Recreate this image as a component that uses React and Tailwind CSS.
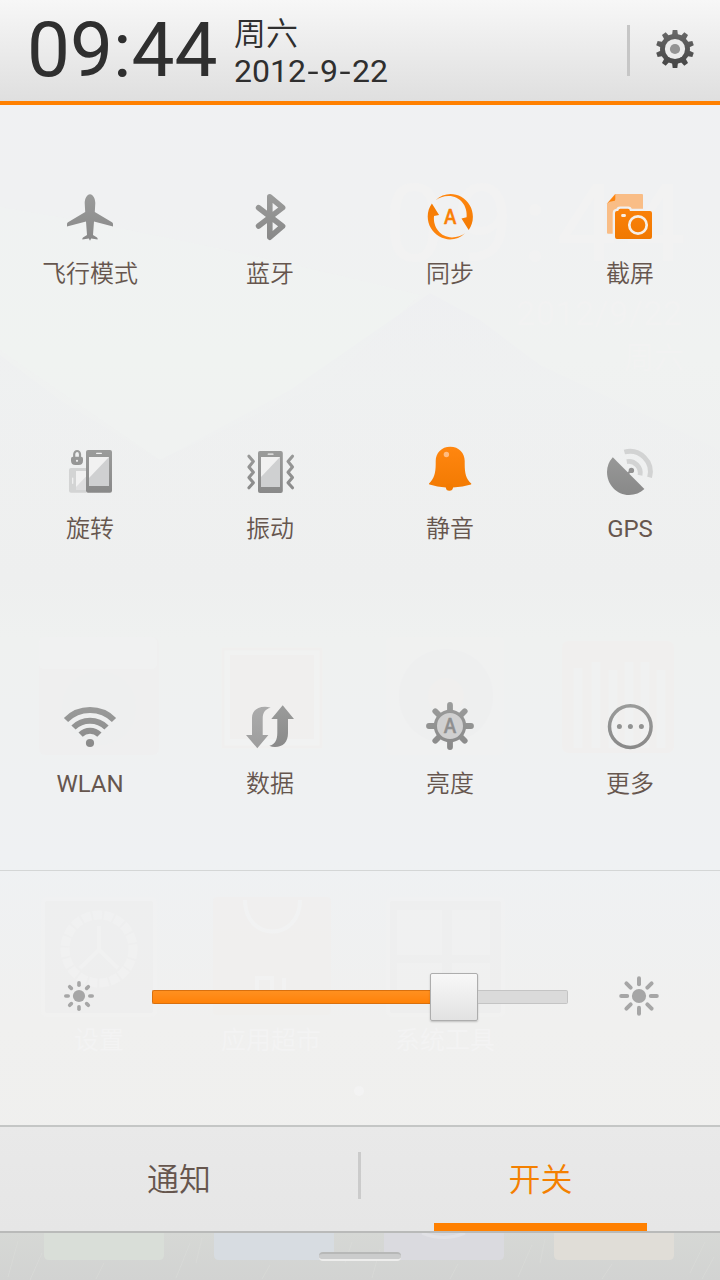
import React from "react";

const GREY = "url(#grey)";
const ORANGE = "url(#orange)";

function Gradients() {
  return (
    <svg className="absolute h-0 w-0" aria-hidden="true">
      <defs>
        <linearGradient id="grey" gradientUnits="userSpaceOnUse" x1="0" y1="6" x2="0" y2="54">
          <stop offset="0" stopColor="#9b9c9b" />
          <stop offset="1" stopColor="#888888" />
        </linearGradient>
        <linearGradient id="lightGrey" gradientUnits="userSpaceOnUse" x1="0" y1="6" x2="0" y2="54">
          <stop offset="0" stopColor="#adadad" />
          <stop offset="1" stopColor="#9c9c9c" />
        </linearGradient>
        <linearGradient id="orange" gradientUnits="userSpaceOnUse" x1="0" y1="6" x2="0" y2="54">
          <stop offset="0" stopColor="#ff860f" />
          <stop offset="1" stopColor="#f07800" />
        </linearGradient>
        <linearGradient id="gear" gradientUnits="userSpaceOnUse" x1="0" y1="0" x2="0" y2="40">
          <stop offset="0" stopColor="#6a6a6a" />
          <stop offset="1" stopColor="#434343" />
        </linearGradient>
      </defs>
    </svg>
  );
}

function Icon({ children }) {
  return (
    <svg className="block h-[60px] w-[60px]" viewBox="0 0 60 60" fill="none" aria-hidden="true">
      {children}
    </svg>
  );
}

const Airplane = () => (
  <Icon>
    <path
      fill={GREY}
      d="M30 7.2C27 7.4 24.7 11.5 24.7 16L25.2 25 8 35.2Q7 35.9 7 37V39.5L26 34.4 27 48 23 50.4Q22 51.2 22.4 52.4L28.8 51.6 30 53.8 31.2 51.6 37.6 52.4Q38 51.2 37 50.4L33 48 34 34.4 53 39.5V37Q53 35.9 52 35.2L34.8 25 35.3 16C35.3 11.5 33 7.4 30 7.2Z"
    />
  </Icon>
);

const Bluetooth = () => (
  <Icon>
    <path
      stroke={GREY}
      strokeWidth="5.6"
      strokeLinecap="round"
      strokeLinejoin="round"
      d="M18.6 20.8L42.6 39.2 29.8 50.2V9.8L42.6 20.6 18.6 39"
    />
  </Icon>
);

const syncHalf =
  "M15.6 13.2C22.5 6.3 33 5.1 41.2 9.8 48.4 14 52.9 21.4 52.9 29.8 52.9 34.8 51.4 39.3 48.7 43L41.5 31.4 46.6 30.3C47.8 19 40 8.9 28.5 9 23.5 9.1 19 10.6 15.6 13.2Z";

const Sync = () => (
  <Icon>
    <path fill={ORANGE} d={syncHalf} />
    <path fill={ORANGE} d={syncHalf} transform="rotate(180 30.3 29.7)" />
    <g transform="translate(30.2 37.2) scale(0.84 1)">
      <text textAnchor="middle" fill="#fa8005" stroke="#fa8005" strokeWidth="0.5" strokeLinejoin="round" className="font-['Lato',sans-serif] text-[20.5px] font-bold">A</text>
    </g>
  </Icon>
);

const Screenshot = () => (
  <Icon>
    <path fill="#f9bd86" d="M15 7H42Q43 7 43 8V46.7H8Q7 46.7 7 45.7V16.4Z" />
    <path fill={ORANGE} d="M15.3 7.3V12.2Q15.3 14 13.5 14.1 9.2 14.3 7.2 16.6Z" />
    <path fill="#f0f0f1" d="M12.7 47V26Q12.7 22.2 16.4 21.8 17.2 19.4 20 19.4H28.5Q31 19.4 31.8 21.8H44V47Z" />
    <path fill={ORANGE} d="M17 24H18.2Q18.6 21.8 20.4 21.8H28Q29.6 21.8 30 24H50Q52 24 52 26V50Q52 52 50 52H17Q15 52 15 50V26Q15 24 17 24Z" />
    <circle cx="38" cy="38" r="8.7" stroke="#f6efe8" strokeWidth="2.7" />
    <rect x="21.2" y="27" width="4.7" height="3.1" rx="1.3" fill="#f8eee4" />
  </Icon>
);

const Rotate = () => (
  <Icon>
    <path fill="#d3d4d4" d="M11 26H26V50.7H11Q9 50.7 9 48.7V28Q9 26 11 26Z" />
    <rect x="16" y="29" width="10" height="19" fill="#dededf" />
    <path fill="#f1f1f1" d="M16 29H26V34.5L16 45Z" />
    <path stroke="#f2f2f2" strokeLinecap="round" strokeWidth="1.2" d="M12.7 36V41.3" />
    <rect x="26" y="8" width="26" height="42.7" rx="2" fill={GREY} />
    <rect x="29" y="15" width="20" height="29" fill="#cfd0d1" />
    <path fill="#f1f1f1" d="M29 15H49L29 36Z" />
    <path stroke="#f1f1f1" strokeLinecap="round" strokeWidth="1.2" d="M36.6 11.3H41.4" />
    <path stroke={GREY} strokeWidth="2.2" d="M14.2 16V12.2A2.9 3.2 0 0 1 20 12.2V16" />
    <path fill={GREY} d="M13 14.8H21Q23 14.8 23 16.6V18.5Q23 23 18.5 23H15.5Q11 23 11 18.5V16.6Q11 14.8 13 14.8Z" />
    <circle cx="17" cy="18.8" r="1.1" fill="#eee" />
  </Icon>
);

const Vibrate = () => (
  <Icon>
    <rect x="18" y="9" width="24.8" height="42" rx="2" fill={GREY} />
    <rect x="21" y="15" width="19" height="30" fill="#cfd0d1" />
    <path fill="#f1f1f1" d="M21 15H40L21 35Z" />
    <path stroke="#f1f1f1" strokeLinecap="round" strokeWidth="1.2" d="M28.2 12.2H33" />
    <g stroke={GREY} strokeWidth="3.1" strokeLinecap="round" strokeLinejoin="round">
      <path d="M8.9 14.2L13.4 19.4 8.9 25 13.4 30.2 8.9 35.4 13.4 40.8 8.9 45.8" />
      <path d="M52.5 14.2L48 19.4 52.5 25 48 30.2 52.5 35.4 48 40.8 52.5 45.8" />
    </g>
  </Icon>
);

const Bell = () => (
  <Icon>
    <path
      fill={ORANGE}
      d="M30.2 4.7C21.5 4.7 15.7 11 15.7 19V22C15.7 31 14 37 9 41.4Q8.8 42.2 9.6 42.6 17 45 26 45.6A3.6 3.2 0 0 0 33 45.6Q43 45 51 42.6 51.6 42 51.2 41.4C46 37 44.7 31 44.7 22V19C44.7 11 39 4.7 30.2 4.7Z"
    />
    <circle cx="29.4" cy="45.2" r="3.5" fill="#f27a01" />
    <circle cx="26.4" cy="12.5" r="2.7" fill="#ffbb80" />
  </Icon>
);

const Gps = () => (
  <Icon>
    <path stroke="#d2d3d3" strokeWidth="4.9" d="M24.4 10A20.6 20.6 0 0 1 49.6 35.3" />
    <path stroke="#d2d3d3" strokeWidth="4.9" d="M26.8 19.6A11.5 11.5 0 0 1 40 33.2" />
    <path fill={GREY} d="M12.8 15.2A22 22 0 0 0 7 30C7 42.6 16.6 53 29 53 35 53 40.4 50.8 44.4 47Z" />
    <path stroke={GREY} strokeWidth="2.2" d="M27.5 32L31.5 28" />
    <circle cx="31.4" cy="28.4" r="2.7" fill="#929292" />
  </Icon>
);

const Wifi = () => (
  <Icon>
    <circle cx="30" cy="46" r="4.1" fill={GREY} />
    <g stroke={GREY} strokeWidth="6">
      <path d="M6 23A34 34 0 0 1 54 23" />
      <path d="M13.5 30.5A23.3 23.3 0 0 1 46.5 30.5" />
      <path d="M20.6 37.6A13.3 13.3 0 0 1 39.4 37.6" />
    </g>
  </Icon>
);

const Data = () => (
  <Icon>
    <path fill="url(#lightGrey)" d="M12 38V21C12 14 17 9.7 25 9.7Q28 9.7 30.7 10.8C25 12 22.7 16 22.7 22V38H28.4L17.3 51.2 6 38Z" />
    <path fill={GREY} d="M42.7 8.2L54 22H48V36C48 45 43 50 35 50Q32 50 29.3 48.8C35 47.5 37.3 43 37.3 36V22H31.3Z" />
  </Icon>
);

const Brightness = () => (
  <Icon>
    <g stroke={GREY} strokeWidth="5.8" strokeLinecap="round">
      <path d="M30 15V8M30 43V50M16 29H9M44 29H51M20 19L15.3 14.3M40 19L44.7 14.3M20 39L15.3 43.7M40 39L44.7 43.7" />
    </g>
    <circle cx="30" cy="29" r="14.6" fill="#d0d0d0" stroke={GREY} strokeWidth="3.2" />
    <g transform="translate(30 36.2) scale(0.84 1)">
      <text textAnchor="middle" fill="#8f8f8f" stroke="#8f8f8f" strokeWidth="0.5" strokeLinejoin="round" className="font-['Lato',sans-serif] text-[20.5px] font-bold">A</text>
    </g>
  </Icon>
);

const More = () => (
  <Icon>
    <circle cx="30.3" cy="29.6" r="20.8" stroke={GREY} strokeWidth="3.5" />
    <circle cx="19.4" cy="29.6" r="2.5" fill={GREY} />
    <circle cx="30.4" cy="29.6" r="2.5" fill={GREY} />
    <circle cx="41.4" cy="29.6" r="2.5" fill={GREY} />
  </Icon>
);

const toggles = [
  { label: "飞行模式", icon: Airplane },
  { label: "蓝牙", icon: Bluetooth },
  { label: "同步", icon: Sync },
  { label: "截屏", icon: Screenshot },
  { label: "旋转", icon: Rotate },
  { label: "振动", icon: Vibrate },
  { label: "静音", icon: Bell },
  { label: "GPS", icon: Gps },
  { label: "WLAN", icon: Wifi },
  { label: "数据", icon: Data },
  { label: "亮度", icon: Brightness },
  { label: "更多", icon: More },
];

const toothAngles = [0, 36, 72, 108, 144, 180, 216, 252, 288, 324];

function SettingsGear() {
  return (
    <svg className="block h-10 w-10" viewBox="0 0 40 40" aria-hidden="true">
      <mask id="teeth">
        {toothAngles.map((a) => (
          <path key={a} fill="#fff" d="M16.8 8L17.7 1H22.3L23.2 8Z" transform={`rotate(${a} 20 20)`} />
        ))}
        <circle cx="20" cy="20" r="15" fill="#fff" />
      </mask>
      <rect width="40" height="40" fill="url(#gear)" mask="url(#teeth)" />
      <circle cx="20" cy="20" r="10.1" fill="#ececec" />
      <circle cx="20" cy="20" r="5.1" fill="#949494" />
    </svg>
  );
}

function Sun({ core, from, to, width }) {
  return (
    <svg className="block h-11 w-11" viewBox="-22 -22 44 44" aria-hidden="true">
      <circle r={core} fill="#a6a6a6" />
      {[0, 45, 90, 135, 180, 225, 270, 315].map((a) => (
        <path
          key={a}
          d={`M0 ${-from}V${-to}`}
          transform={`rotate(${a})`}
          stroke="#a6a6a6"
          strokeWidth={width}
          strokeLinecap="round"
        />
      ))}
    </svg>
  );
}

/* The home screen that shows faintly through the translucent shade. */
function HomeScreen() {
  return (
    <svg className="absolute inset-0 h-full w-full" viewBox="0 0 720 1280" aria-hidden="true">
      <defs>
        <linearGradient id="sky" x1="0" y1="0" x2="0" y2="1">
          <stop offset="0" stopColor="#f0f1f3" />
          <stop offset="0.16" stopColor="#f0f1f2" />
          <stop offset="0.28" stopColor="#f0f2f1" />
          <stop offset="0.45" stopColor="#eeefef" />
          <stop offset="0.5" stopColor="#eff1f0" />
          <stop offset="0.67" stopColor="#eff1f3" />
          <stop offset="0.8" stopColor="#f0f0ef" />
          <stop offset="1" stopColor="#efefed" />
        </linearGradient>
        <linearGradient id="hill" x1="0" y1="0" x2="0" y2="1">
          <stop offset="0" stopColor="#eeeff1" />
          <stop offset="1" stopColor="#eeeff0" stopOpacity="0" />
        </linearGradient>
      </defs>
      <rect width="720" height="1280" fill="url(#sky)" />
      <path d="M0 207Q200 240 420 295L330 380 160 460 0 350Z" fill="#f0f3f2" opacity="0.6" />
      <path d="M0 355L60 400 160 460 290 390 430 293 480 320 540 365 720 450V600H0Z" fill="url(#hill)" opacity="0.7" />
      <g fill="#f2f2f2" className="font-['Roboto','Noto_Sans_CJK_SC',sans-serif]">
        <text x="384" y="261" className="text-[108px]" textLength="302">09:44</text>
        <text x="516" y="325" className="text-[34px]" textLength="166">2012/9/22</text>
        <text x="624" y="368" className="text-[30px]">周六</text>
      </g>
      <g opacity="0.55">
        <rect x="39" y="637" width="120" height="118" rx="6" fill="#efefef" />
        <rect x="39" y="637" width="118" height="32" rx="5" fill="#f2f2f2" />
        <circle cx="99" cy="708" r="37" fill="#eeeeef" />
        <rect x="223" y="649" width="98" height="98" fill="#f3f3f3" stroke="#f2efed" strokeWidth="3" />
        <rect x="230" y="655" width="84" height="84" fill="#f1efed" />
        <rect x="386" y="637" width="118" height="118" rx="6" fill="#f1f1f1" />
        <circle cx="446" cy="696" r="47" fill="#eeeeef" />
        <circle cx="446" cy="696" r="18" fill="#f1efed" />
        <rect x="564" y="643" width="108" height="108" rx="4" fill="#f1efed" stroke="#f2efed" strokeWidth="4" />
        <path d="M578 748V668M596 748V662M613 748V670M629 748V662M645 748V662M661 748V670" stroke="#f1f1f2" strokeWidth="9" />
        <rect x="43" y="899" width="112" height="116" rx="4" fill="#eeeeee" stroke="#f2f2f2" strokeWidth="4" />
        <circle cx="99" cy="949" r="34" fill="none" stroke="#f2f2f2" strokeWidth="9" strokeDasharray="9 2" />
        <path d="M99 926V950L80 968M99 950L118 968" fill="none" stroke="#f2f2f2" strokeWidth="4" />
        <rect x="213" y="897" width="118" height="118" rx="4" fill="#f1efed" />
        <path d="M245 900C245 942 300 942 300 900" fill="none" stroke="#f4f4f4" strokeWidth="4" />
        <path d="M257 992V978H272V992M284 978V992" fill="none" stroke="#f4f4f4" strokeWidth="4" />
        <rect x="388" y="899" width="115" height="116" rx="4" fill="#eeeeee" stroke="#f2f2f2" strokeWidth="4" />
        <path d="M397 910H442V955H397ZM452 910H490V955H452ZM397 963H442V1000H397ZM452 963H490V1000H452Z" fill="#f1f1f1" />
      </g>
      <g fill="#f3f3f3" className="font-['Noto_Sans_CJK_SC',sans-serif] text-[25px]">
        <text x="74" y="1049">设置</text>
        <text x="221" y="1049">应用超市</text>
        <text x="395" y="1049">系统工具</text>
      </g>
      <circle cx="359" cy="1091" r="5" fill="#f3f3f3" />
    </svg>
  );
}

function Dock() {
  return (
    <div className="relative flex h-[49px] items-start justify-center border-t-2 border-[#b9bab9] bg-linear-to-b from-[#d6d8d5] to-[#d2d3d2]">
      <svg className="absolute inset-x-0 top-0 h-[47px] w-full" viewBox="0 0 720 47" aria-hidden="true">
        <path
          d="M8 44L18 8M30 47L42 20M176 45L190 10M196 30L202 5M345 30L352 9M372 45L380 16M518 44L532 12M540 30L545 6M690 40L705 9M702 46L714 24M96 46L104 30M262 46L270 32M450 46L458 31M602 46L612 31"
          stroke="#dadbd8"
          strokeWidth="0.7"
        />
        <path fill="#d9ded8" d="M44 0H164V22Q164 27 159 27H49Q44 27 44 22Z" />
        <path fill="#d7dce1" d="M214 0H334V22Q334 27 329 27H219Q214 27 214 22Z" />
        <path fill="#dadadf" d="M384 0H504V22Q504 27 499 27H389Q384 27 384 22Z" />
        <path fill="#e0ddd7" d="M554 0H674V22Q674 27 669 27H559Q554 27 554 22Z" />
        <path d="M422 0Q444 9 465 0" fill="none" stroke="#e1e1e5" strokeWidth="3" />
      </svg>
      <div className="relative mt-[19px] h-[9px] w-[82px] rounded-[4px] border-t-2 border-b-2 border-t-[#b7b8b7] border-b-[#ededec] bg-[#cbcccc]" />
    </div>
  );
}

export default function App() {
  return (
    <div className="relative h-[1280px] w-[720px] overflow-hidden bg-[#f0f1f1] font-['Roboto','Noto_Sans_CJK_SC_DemiLight','Noto_Sans_CJK_SC',sans-serif]">
      <Gradients />
      <HomeScreen />
      <div className="relative flex h-full flex-col">
        <header className="flex h-[105px] shrink-0 items-start border-b-4 border-[#ff8000] bg-linear-to-b from-[#f7f7f7] to-[#dfdfdf] text-[#2f2f2f]">
          <div className="ml-[27px] w-[207px] pt-[5px] text-[76.5px] leading-[90px] whitespace-nowrap">09:44</div>
          <div className="flex flex-1 flex-col pt-[15px]">
            <div className="h-[37px] text-[32px] leading-[38px]">周六</div>
            <div className="flex h-[38px] text-[32px] leading-[38px]">
              <span>2012</span>
              <span className="w-[14px] scale-x-125 text-center">-</span>
              <span>9</span>
              <span className="w-[14px] scale-x-125 text-center">-</span>
              <span>22</span>
            </div>
          </div>
          <div className="mt-[25px] h-[51px] w-[3px] bg-[#c6c6c6]" />
          <button className="mt-[29px] mr-[25px] ml-[25px]" aria-label="设置">
            <SettingsGear />
          </button>
        </header>

        <main className="grid h-[765px] shrink-0 grid-cols-4 grid-rows-3">
          {toggles.map(({ label, icon: Glyph }) => (
            <button key={label} className="flex flex-col items-center pt-[82px]">
              <Glyph />
              <span className="mt-[11px] text-2xl leading-8 whitespace-nowrap text-[#66564e]">{label}</span>
            </button>
          ))}
        </main>

        <section className="flex h-[255px] shrink-0 items-start border-t border-[#d4d6d6] pt-[102px]">
          <div className="ml-[57px] pt-[1px]">
            <Sun core={6.1} from={10.8} to={13.2} width={3.6} />
          </div>
          <div className="ml-[51px] flex h-12 w-[416px] items-center">
            <div className="h-[14px] w-[278px] rounded-l-[2px] border border-r-0 border-[#d8700f] bg-linear-to-b from-[#ff901f] to-[#ff8206]" />
            <div className="h-12 w-12 shrink-0 rounded-[2px] border border-[#adadad] bg-linear-to-b from-[#f8f8f8] to-[#e2e2e2] shadow-[0_1px_2px_rgba(0,0,0,0.2)]" />
            <div className="h-[14px] flex-1 rounded-r-[2px] border border-l-0 border-[#c4c4c4] bg-[#dadada]" />
          </div>
          <div className="ml-[49px] pt-[1px]">
            <Sun core={7.1} from={11.8} to={17.8} width={4} />
          </div>
        </section>

        <nav className="flex h-[106px] shrink-0 items-start border-t-2 border-[#c4c6c5] bg-linear-to-b from-[#e9e9e9] to-[#e6e6e6] text-[32px] leading-[40px]">
          <button className="flex h-full w-[358px] justify-center pt-[33px] text-[#66564e]">通知</button>
          <div className="mt-[25px] h-[47px] w-[3px] bg-[#cbcbcb]" />
          <button className="flex h-full flex-1 flex-col items-center justify-between pt-[33px] text-[#f48000]">
            <span>开关</span>
            <span className="h-2 w-[213px] bg-[#ff8000]" />
          </button>
        </nav>

        <Dock />
      </div>
    </div>
  );
}
